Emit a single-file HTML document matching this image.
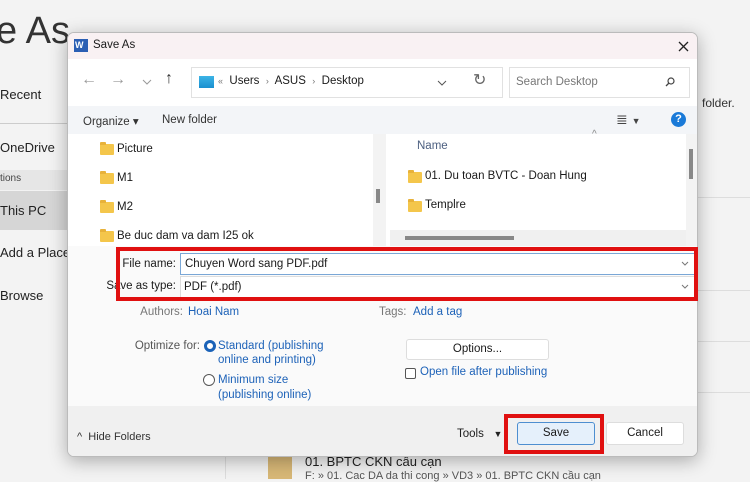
<!DOCTYPE html>
<html><head><meta charset="utf-8"><style>
*{margin:0;padding:0;box-sizing:border-box}
body{width:750px;height:479px;overflow:hidden;background:#f3f3f3;font-family:"Liberation Sans",sans-serif;position:relative;color:#1a1a1a}
.a{position:absolute;white-space:nowrap}
.f{position:absolute;width:14px;height:11px;background:#f4c64b;border-radius:1px}
.f:before{content:"";position:absolute;left:0;top:-2px;width:6px;height:3px;background:#e8b23a;border-radius:1px 1px 0 0}
.lnk{color:#1d62b8}
.d{font-size:11.5px}
</style></head><body>
<div class="a" style="left:-4px;top:10px;font-size:38px;color:#333;font-weight:300">e As</div>
<div class="a" style="left:0;top:87px;font-size:13px;color:#222">Recent</div>
<div class="a" style="left:0;top:123px;width:67px;height:1px;background:#ccc"></div>
<div class="a" style="left:0;top:140px;font-size:13px;color:#222">OneDrive</div>
<div class="a" style="left:0;top:170px;width:67px;height:20px;background:#e6e6e6"></div>
<div class="a" style="left:0;top:173px;font-size:10px;color:#444">tions</div>
<div class="a" style="left:0;top:191px;width:67px;height:39px;background:#d6d6d6"></div>
<div class="a" style="left:0;top:203px;font-size:13px;color:#222">This PC</div>
<div class="a" style="left:0;top:245px;font-size:13px;color:#222">Add a Place</div>
<div class="a" style="left:0;top:288px;font-size:13px;color:#222">Browse</div>
<div class="a" style="left:702px;top:96px;font-size:12px;color:#333">folder.</div>
<div class="a" style="left:698px;top:197px;width:52px;height:1px;background:#ddd"></div>
<div class="a" style="left:698px;top:290px;width:52px;height:1px;background:#ddd"></div>
<div class="a" style="left:698px;top:341px;width:52px;height:1px;background:#ddd"></div>
<div class="a" style="left:698px;top:392px;width:52px;height:1px;background:#ddd"></div>
<div class="a" style="left:225px;top:455px;width:1px;height:24px;background:#ddd"></div>
<div class="a" style="left:268px;top:456px;width:24px;height:23px;background:#d8b877"></div>
<div class="a" style="left:305px;top:454px;font-size:13px;color:#222">01. BPTC CKN cầu cạn</div>
<div class="a" style="left:305px;top:470px;font-size:11px;color:#555">F: » 01. Cac DA da thi cong » VD3 » 01. BPTC CKN cầu cạn</div>

<div class="a d" style="left:67px;top:32px;width:631px;height:425px;background:#fff;border:1px solid #bbb;border-radius:7px;box-shadow:0 4px 18px rgba(0,0,0,.3);overflow:hidden">
 <div class="a" style="left:0;top:0;width:631px;height:26px;background:#f9f1f3"></div>
 <div class="a" style="left:6px;top:6px;width:14px;height:13px;background:#2b5fb4;color:#fff;font-size:9px;font-weight:bold;line-height:13px;padding-left:1px">W</div>
 <div class="a" style="left:25px;top:6px;font-size:11.5px">Save As</div>
 <svg class="a" style="left:610px;top:8px" width="11" height="11"><path d="M1 1L10 10M10 1L1 10" stroke="#222" stroke-width="1.3"/></svg>
 <div class="a" style="left:13px;top:38px;font-size:16px;color:#999">←</div>
 <div class="a" style="left:42px;top:38px;font-size:16px;color:#999">→</div>
 <svg class="a" style="left:74px;top:46px" width="10" height="6"><path d="M1 1L5 5L9 1" stroke="#999" fill="none"/></svg>
 <div class="a" style="left:97px;top:37px;font-size:16px;color:#333">↑</div>
 <div class="a" style="left:123px;top:34px;width:312px;height:31px;border:1px solid #e1e1e1"></div>
 <div class="a" style="left:131px;top:43px;width:15px;height:12px;background:linear-gradient(#3cb4e6,#1a8fcf)"></div>
 <div class="a" style="left:150px;top:42px;font-size:11.5px"><span style="color:#777;font-size:9px">«</span>&nbsp; Users &nbsp;<span style="color:#777;font-size:9px">›</span>&nbsp; ASUS &nbsp;<span style="color:#777;font-size:9px">›</span>&nbsp; Desktop</div>
 <svg class="a" style="left:369px;top:47px" width="10" height="6"><path d="M1 1L5 5L9 1" stroke="#555" fill="none"/></svg>
 <div class="a" style="left:405px;top:37px;font-size:16px;color:#666">↻</div>
 <div class="a" style="left:441px;top:34px;width:181px;height:31px;border:1px solid #e1e1e1"></div>
 <div class="a" style="left:448px;top:43px;font-size:11.5px;color:#777">Search Desktop</div>
 <svg class="a" style="left:597px;top:44px" width="10" height="10"><circle cx="6" cy="4" r="3" stroke="#444" fill="none" stroke-width="1.2"/><path d="M4 6L1 9" stroke="#444" stroke-width="1.3"/></svg>
 <div class="a" style="left:0;top:73px;width:631px;height:28px;background:#f3f5f8"></div>
 <div class="a" style="left:15px;top:81px;color:#333">Organize ▾</div>
 <div class="a" style="left:94px;top:81px;color:#333">New folder</div>
 <div class="a" style="left:548px;top:78px;font-size:14px;color:#444">≣ <span style="font-size:9px">▼</span></div>
 <div class="a" style="left:603px;top:79px;width:15px;height:15px;border-radius:50%;background:#1a7ad8;color:#fff;font-size:11px;font-weight:bold;text-align:center;line-height:15px">?</div>
 <div class="a" style="left:0;top:101px;width:631px;height:112px;background:#f3f3f3"></div>
 <div class="a" style="left:0;top:101px;width:305px;height:112px;background:#fff"></div>
 <div class="a" style="left:308px;top:156px;width:4px;height:14px;background:#888"></div>
 <div class="a" style="left:318px;top:101px;width:300px;height:112px;background:#fff"></div>
 <div class="a" style="left:621px;top:116px;width:4px;height:30px;background:#888"></div>
 <div class="a" style="left:322px;top:197px;width:296px;height:16px;background:#f0f0f0"></div>
 <div class="a" style="left:337px;top:203px;width:109px;height:4px;background:#888"></div>
 <div class="f" style="left:32px;top:111px"></div><div class="a" style="left:49px;top:110px">Picture</div>
 <div class="f" style="left:32px;top:140px"></div><div class="a" style="left:49px;top:139px">M1</div>
 <div class="f" style="left:32px;top:169px"></div><div class="a" style="left:49px;top:168px">M2</div>
 <div class="f" style="left:32px;top:198px"></div><div class="a" style="left:49px;top:197px">Be duc dam va dam I25 ok</div>
 <div class="a" style="left:524px;top:96px;font-size:10px;color:#888">^</div>
 <div class="a" style="left:349px;top:107px;color:#4c5f80">Name</div>
 <div class="f" style="left:340px;top:139px"></div><div class="a" style="left:357px;top:137px">01. Du toan BVTC - Doan Hung</div>
 <div class="f" style="left:340px;top:168px"></div><div class="a" style="left:357px;top:166px">Templre</div>
 <div class="a" style="left:0;top:213px;width:631px;height:160px;background:#fafafa"></div>
 <div class="a" style="left:20px;top:225px;width:88px;text-align:right">File name:</div>
 <div class="a" style="left:112px;top:220px;width:515px;height:22px;background:#fff;border:1px solid #7aa7d6"></div>
 <div class="a" style="left:117px;top:225px">Chuyen Word sang PDF.pdf</div>
 <div class="a" style="left:20px;top:247px;width:88px;text-align:right">Save as type:</div>
 <div class="a" style="left:112px;top:243px;width:515px;height:22px;background:#fff;border:1px solid #ddd"></div>
 <div class="a" style="left:116px;top:248px">PDF (*.pdf)</div>
 <svg class="a" style="left:613px;top:228px" width="8" height="5"><path d="M1 1L4 4L7 1" stroke="#777" fill="none"/></svg>
 <svg class="a" style="left:613px;top:251px" width="8" height="5"><path d="M1 1L4 4L7 1" stroke="#777" fill="none"/></svg>
 <div class="a" style="left:30px;top:273px;width:85px;text-align:right;color:#777">Authors:</div>
 <div class="a lnk" style="left:120px;top:273px">Hoai Nam</div>
 <div class="a" style="left:311px;top:273px;color:#777">Tags:</div>
 <div class="a lnk" style="left:345px;top:273px">Add a tag</div>
 <div class="a" style="left:40px;top:307px;width:92px;text-align:right;color:#555">Optimize for:</div>
 <div class="a" style="left:136px;top:307px;width:12px;height:12px;border-radius:50%;border:3.5px solid #1a62b8;background:#fff"></div>
 <div class="a lnk" style="left:150px;top:306px;line-height:14px">Standard (publishing<br>online and printing)</div>
 <div class="a" style="left:135px;top:341px;width:12px;height:12px;border-radius:50%;border:1px solid #555;background:#fff"></div>
 <div class="a lnk" style="left:150px;top:340px;line-height:15px">Minimum size<br>(publishing online)</div>
 <div class="a" style="left:338px;top:306px;width:143px;height:21px;border:1px solid #ddd;border-radius:3px;background:#fff;text-align:center;line-height:19px">Options...</div>
 <div class="a" style="left:337px;top:335px;width:11px;height:11px;border:1px solid #555;border-radius:2px;background:#fff"></div>
 <div class="a lnk" style="left:352px;top:333px">Open file after publishing</div>
 <div class="a" style="left:0;top:373px;width:631px;height:52px;background:#f0f0f0"></div>
 <div class="a" style="left:9px;top:398px;font-size:11px;color:#333">^&nbsp; Hide Folders</div>
 <div class="a" style="left:389px;top:395px;color:#222">Tools &nbsp;&nbsp;<span style="font-size:9px">▼</span></div>
 <div class="a" style="left:449px;top:389px;width:78px;height:23px;border:1px solid #4d8ed0;border-radius:3px;background:#e5f0fb;text-align:center;line-height:21px">Save</div>
 <div class="a" style="left:538px;top:389px;width:78px;height:23px;border:1px solid #ddd;border-radius:3px;background:#fff;text-align:center;line-height:21px">Cancel</div>
</div>
<div class="a" style="left:116px;top:247px;width:582px;height:54px;border:4px solid #e01010"></div>
<div class="a" style="left:504px;top:414px;width:100px;height:40px;border:4px solid #e01010"></div>
</body></html>
